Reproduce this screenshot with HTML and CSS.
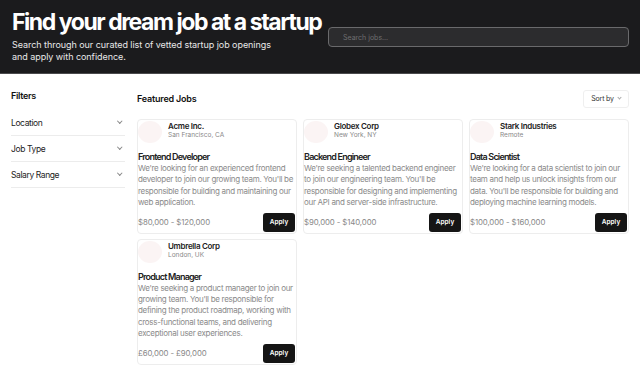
FILE: index.html
```html
<!DOCTYPE html>
<html>
<head>
<meta charset="utf-8">
<link rel="stylesheet" href="styles.css">
</head>
<body>
<header class="hero">
  <div class="hero-text">
    <h1>Find your dream job at a startup</h1>
    <p>Search through our curated list of vetted startup job openings and apply with confidence.</p>
  </div>
  <div class="search">Search jobs...</div>
</header>
<div class="layout">
  <aside class="filters">
    <h2>Filters</h2>
    <div class="filter">Location <span class="chev"></span></div>
    <div class="filter">Job Type <span class="chev"></span></div>
    <div class="filter">Salary Range <span class="chev"></span></div>
  </aside>
  <main class="main">
    <div class="main-head">
      <h2>Featured Jobs</h2>
      <div class="sort">Sort by <span class="chev"></span></div>
    </div>
    <div class="grid">
      <div class="card">
        <div class="co"><div class="logo"></div><div><div class="co-name">Acme Inc.</div><div class="co-loc">San Francisco, CA</div></div></div>
        <div class="title">Frontend Developer</div>
        <p class="desc">We're looking for an experienced frontend developer to join our growing team. You'll be responsible for building and maintaining our web application.</p>
        <div class="foot"><span class="salary">$80,000 - $120,000</span><span class="apply">Apply</span></div>
      </div>
      <div class="card">
        <div class="co"><div class="logo"></div><div><div class="co-name">Globex Corp</div><div class="co-loc">New York, NY</div></div></div>
        <div class="title">Backend Engineer</div>
        <p class="desc">We're seeking a talented backend engineer to join our engineering team. You'll be responsible for designing and implementing our API and server-side infrastructure.</p>
        <div class="foot"><span class="salary">$90,000 - $140,000</span><span class="apply">Apply</span></div>
      </div>
      <div class="card">
        <div class="co"><div class="logo"></div><div><div class="co-name">Stark Industries</div><div class="co-loc">Remote</div></div></div>
        <div class="title">Data Scientist</div>
        <p class="desc">We're looking for a data scientist to join our team and help us unlock insights from our data. You'll be responsible for building and deploying machine learning models.</p>
        <div class="foot"><span class="salary">$100,000 - $160,000</span><span class="apply">Apply</span></div>
      </div>
      <div class="card">
        <div class="co"><div class="logo"></div><div><div class="co-name">Umbrella Corp</div><div class="co-loc">London, UK</div></div></div>
        <div class="title">Product Manager</div>
        <p class="desc">We're seeking a product manager to join our growing team. You'll be responsible for defining the product roadmap, working with cross-functional teams, and delivering exceptional user experiences.</p>
        <div class="foot"><span class="salary">£60,000 - £90,000</span><span class="apply">Apply</span></div>
      </div>
    </div>
  </main>
</div>
</body>
</html>
```
FILE: styles.css
```css
* { box-sizing: border-box; }
body { margin: 0; font-family: Inter, "Noto Sans", sans-serif; color: #111; background: #fff; }
.hero { background: #1b1b1d; height: 74px; display: flex; align-items: flex-start; padding: 8px 11px 0 12px; border-bottom: 1px solid #4a4a4c; }
.hero-text { flex: 1; min-width: 0; }
.hero h1 { margin: 0; color: #fff; font-size: 23px; font-weight: 700; letter-spacing: -1.45px; line-height: 28px; white-space: nowrap; }
.hero p { margin: 3px 0 0; color: #e8e8e8; font-size: 9px; letter-spacing: -0.05px; line-height: 12px; width: 276px; }
.search { margin-top: 19px; width: 301px; flex: none; height: 20px; border: 1px solid #6a6a6c; border-radius: 4px; background: #2c2c2e; color: #6e6e70; font-size: 7px; padding: 0 14px; display: flex; align-items: center; }
.layout { display: flex; }
.filters { width: 125px; padding: 16px 0 0 11px; }
.filters h2 { margin: 0 0 8px; font-size: 9px; font-weight: 600; line-height: 12px; letter-spacing: -0.3px; }
.filter { display: flex; justify-content: space-between; align-items: center; font-size: 8.5px; letter-spacing: -0.4px; height: 26px; border-bottom: 1px solid #ececec; padding-right: 4px; color: #222; }
.chev { width: 3.5px; height: 3.5px; border-right: 1px solid #888; border-bottom: 1px solid #888; transform: rotate(45deg); margin-top: -3px; display: inline-block; }
.main { flex: 1; padding: 15px 11px 0 12px; }
.main-head { display: flex; justify-content: space-between; align-items: center; height: 19px; }
.main-head h2 { margin: 0; font-size: 9px; font-weight: 600; letter-spacing: -0.2px; }
.sort { border: 1px solid #efefef; border-radius: 3px; height: 18px; width: 46px; display: flex; align-items: center; justify-content: center; gap: 4px; font-size: 7px; color: #333; letter-spacing: -0.2px; }
.sort .chev { width: 3px; height: 3px; border-color: #aaa; }
.grid { display: grid; grid-template-columns: repeat(3, 160px); gap: 5px 6px; margin-top: 11px; align-items: start; }
.card { border: 1px solid #ededed; border-radius: 4px; padding: 1px 0 1px 0; display: flex; flex-direction: column; }
.co { display: flex; gap: 6px; align-items: flex-start; }
.logo { width: 24px; height: 22px; border-radius: 50%; background: #fbf4f4; }
.co-name { font-size: 8px; font-weight: 600; line-height: 10px; letter-spacing: -0.3px; color: #222; }
.co-loc { font-size: 6.5px; color: #888; line-height: 9px; }
.title { font-size: 9px; font-weight: 600; margin-top: 8px; line-height: 12px; letter-spacing: -0.8px; color: #222; }
.desc { margin: 0; font-size: 8px; color: #8a8a8a; line-height: 11.4px; letter-spacing: -0.3px; padding-right: 1px; }
.foot { display: flex; justify-content: space-between; align-items: center; padding-top: 4px; padding-right: 1px; }
.salary { font-size: 7.8px; color: #888; letter-spacing: -0.1px; }
.apply { background: #151515; color: #fff; font-size: 6.5px; font-weight: 600; width: 32px; height: 19px; border-radius: 3px; display: flex; align-items: center; justify-content: center; }
```
